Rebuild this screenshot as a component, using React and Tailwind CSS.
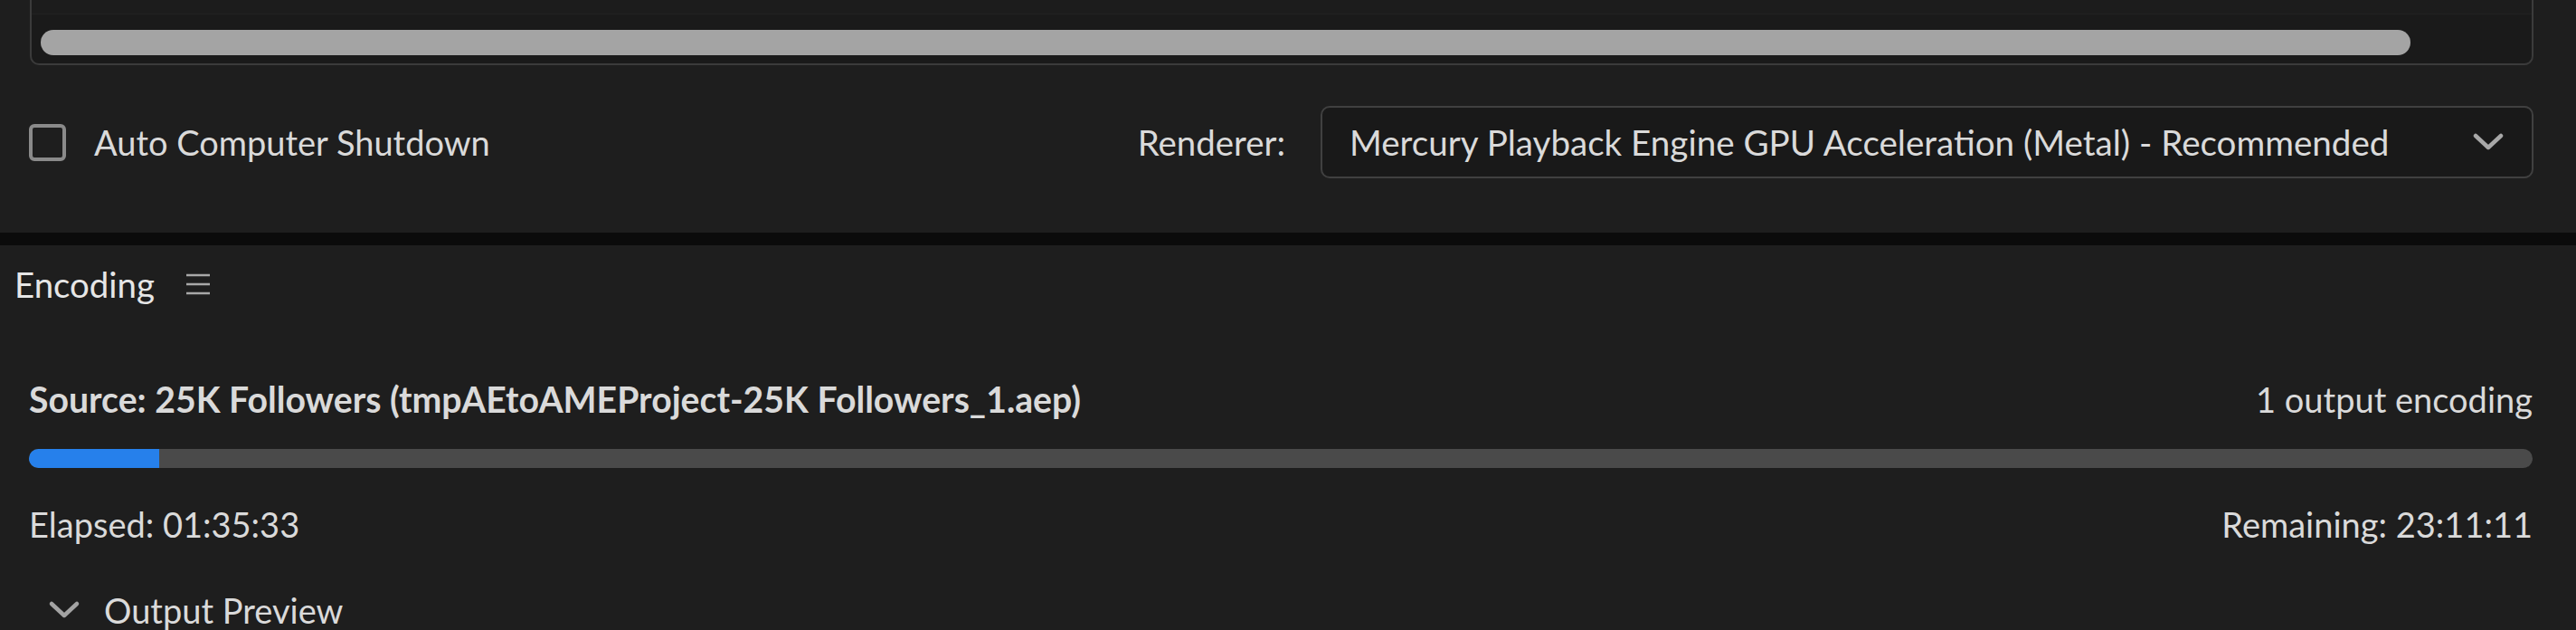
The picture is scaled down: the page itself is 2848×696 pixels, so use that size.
import React from "react";

function Chevron({ className }) {
  return (
    <svg className={className} viewBox="0 0 34 22" fill="none">
      <path d="M3 4 L17 17 L31 4" stroke="currentColor" strokeWidth="4.5" strokeLinecap="round" strokeLinejoin="round" />
    </svg>
  );
}

function Hamburger() {
  return (
    <svg className="w-[28px] h-[24px] text-[#a8a8a8]" viewBox="0 0 28 24" fill="none">
      <path d="M1 2 H27 M1 12 H27 M1 22 H27" stroke="currentColor" strokeWidth="2.5" />
    </svg>
  );
}

export default function App() {
  return (
    <div className="w-[2848px] h-[696px] overflow-hidden bg-[#1e1e1e] text-[#dadada] font-['Lato','Liberation_Sans',sans-serif] text-[38px] leading-none">
      {/* queue panel bottom */}
      <div className="h-[257px] flex flex-col">
        <div className="ml-[33px] w-[2768px] h-[72px] border-x-2 border-b-2 border-[#3b3b3b] rounded-b-[10px] bg-[#1a1a1a]">
          <div className="h-[16px] border-b border-[#222222] bg-[#1c1c1c]" />
          <div className="mt-[17px] ml-[10px] w-[2620px] h-[28px] rounded-full bg-[#a4a4a4]" />
        </div>

        <div className="mt-[45px] h-[80px] flex items-center pl-[32px] pr-[47px]">
          <div className="w-[41px] h-[41px] rounded-[6px] border-[4px] border-[#8a8a8a]" />
          <span className="ml-[31px]">Auto Computer Shutdown</span>
          <div className="flex-1" />
          <span className="text-[38.4px]">Renderer:</span>
          <div className="ml-[39px] w-[1341px] h-[80px] flex items-center border-2 border-[#404040] rounded-[10px] bg-[#191919] pl-[30px] pr-[31px]">
            <span className="flex-1 text-[38.6px]">Mercury Playback Engine GPU Acceleration (Metal) - Recommended</span>
            <Chevron className="w-[34px] h-[22px] text-[#a8a8a8]" />
          </div>
        </div>
      </div>

      <div className="h-[14px] bg-[#0b0b0b]" />

      {/* encoding panel */}
      <div className="flex flex-col">
        <div className="h-[86px] flex items-center pl-[16px] gap-[34px]">
          <span className="text-[#e6e6e6] text-[38.4px]">Encoding</span>
          <Hamburger />
        </div>

        <div className="mt-[54px] h-[60px] flex items-center justify-between pl-[32px] pr-[48px]">
          <span className="font-bold text-[39.2px]">Source: 25K Followers (tmpAEtoAMEProject-25K Followers_1.aep)</span>
          <span>1 output encoding</span>
        </div>

        <div className="mt-[25px] ml-[32px] w-[2768px] h-[21px] rounded-full bg-[#4a4a4a] overflow-hidden">
          <div className="w-[144px] h-full bg-[#2680eb]" />
        </div>

        <div className="mt-[32px] h-[60px] flex items-center justify-between pl-[32px] pr-[48px]">
          <span>Elapsed: 01:35:33</span>
          <span>Remaining: 23:11:11</span>
        </div>

        <div className="mt-[35px] h-[60px] flex items-center pl-[52px]">
          <Chevron className="w-[38px] h-[22px] text-[#a3a3a3]" />
          <span className="ml-[25px]">Output Preview</span>
        </div>
      </div>
    </div>
  );
}
